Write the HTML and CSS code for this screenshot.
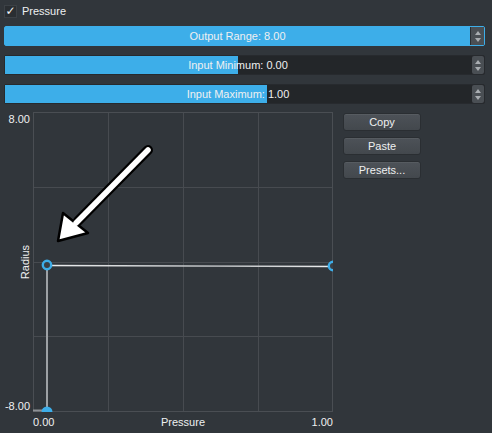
FILE: index.html
```html
<!DOCTYPE html>
<html>
<head>
<meta charset="utf-8">
<link rel="stylesheet" href="styles.css">
</head>
<body>
<div class="page">
  <label class="check-row">
    <span class="checkbox">✓</span>
    <span class="check-label">Pressure</span>
  </label>

  <div class="sliders">
    <div class="slider focused">
      <div class="track">
        <div class="fill" style="width:100%"></div>
        <span class="slider-text">Output Range: 8.00</span>
      </div>
      <div class="spin"><i class="up"></i><i class="down"></i></div>
    </div>
    <div class="slider">
      <div class="track">
        <div class="fill" style="width:50%"></div>
        <span class="slider-text">Input Minimum: 0.00</span>
      </div>
      <div class="spin"><i class="up"></i><i class="down"></i></div>
    </div>
    <div class="slider">
      <div class="track">
        <div class="fill" style="width:56.2%"></div>
        <span class="slider-text">Input Maximum: 1.00</span>
      </div>
      <div class="spin"><i class="up"></i><i class="down"></i></div>
    </div>
  </div>

  <div class="main">
    <div class="chart">
      <svg class="plot" width="340" height="321" viewBox="0 0 340 321">
        <defs>
          <clipPath id="pc"><rect x="33" y="0" width="300" height="300"/></clipPath>
          <linearGradient id="hl" x1="0" x2="1" y1="0" y2="0">
            <stop offset="0" stop-color="#eceeef"/>
            <stop offset="0.6" stop-color="#b9bcbf"/>
            <stop offset="1" stop-color="#eceeef"/>
          </linearGradient>
        </defs>
        <g stroke="#474b50" stroke-width="1" fill="none">
          <line x1="108.5" y1="0" x2="108.5" y2="300"/>
          <line x1="183.5" y1="0" x2="183.5" y2="300"/>
          <line x1="258.5" y1="0" x2="258.5" y2="300"/>
          <line x1="33" y1="75.5" x2="333" y2="75.5"/>
          <line x1="33" y1="150.5" x2="333" y2="150.5"/>
          <line x1="33" y1="224.5" x2="333" y2="224.5"/>
          <rect x="33.5" y="0.5" width="299" height="299" stroke="#4a4e53"/>
        </g>
        <g clip-path="url(#pc)">
          <line x1="33" y1="298.5" x2="47" y2="298.5" stroke="#8c9095" stroke-width="2"/>
          <line x1="47" y1="153" x2="47" y2="300" stroke="#9da1a5" stroke-width="2"/>
          <line x1="47" y1="153.5" x2="333" y2="154.5" stroke="url(#hl)" stroke-width="1.6"/>
          <circle cx="47" cy="153" r="4.2" fill="#3a3f44" stroke="#3daee9" stroke-width="2.4"/>
          <circle cx="333" cy="154" r="4.2" fill="#3a3f44" stroke="#3daee9" stroke-width="2.4"/>
          <circle cx="47" cy="300" r="5.5" fill="#3daee9"/>
        </g>
        <g class="arrow">
          <line x1="148" y1="38" x2="78" y2="109" stroke="#000" stroke-width="10" stroke-linecap="round"/>
          <polygon points="58,129 63,101 88,121" fill="#fff" stroke="#000" stroke-width="2.5" stroke-linejoin="round"/>
          <line x1="148" y1="38" x2="76" y2="111" stroke="#fff" stroke-width="5.5" stroke-linecap="round"/>
        </g>
      </svg>
      <span class="axis ymax">8.00</span>
      <span class="axis ymin">-8.00</span>
      <span class="axis ytitle">Radius</span>
      <span class="axis xmin">0.00</span>
      <span class="axis xtitle">Pressure</span>
      <span class="axis xmax">1.00</span>
    </div>
    <div class="buttons">
      <button class="btn">Copy</button>
      <button class="btn">Paste</button>
      <button class="btn">Presets...</button>
    </div>
  </div>
</div>
</body>
</html>
```

FILE: styles.css
```css
html, body {
  margin: 0;
  padding: 0;
  background: #31363b;
}
body {
  width: 492px;
  height: 433px;
  overflow: hidden;
  font-family: "Liberation Sans", Arial, sans-serif;
  font-size: 11px;
  color: #eff0f1;
}
.page {
  display: flex;
  flex-direction: column;
}
.check-row {
  display: flex;
  align-items: center;
  height: 22px;
  padding-left: 4px;
  gap: 5px;
}
.checkbox {
  width: 11px;
  height: 11px;
  border: 1px solid #3c4146;
  background: #2a2e32;
  color: #f4f5f6;
  font-size: 12px;
  line-height: 11px;
  text-align: center;
  font-family: "DejaVu Sans", sans-serif;
  margin-top: 1px;
}
.check-label {
  line-height: 13px;
  padding-top: 1px;
}
.sliders {
  display: flex;
  flex-direction: column;
  gap: 9px;
  padding: 4px 7px 0 4px;
}
.slider {
  display: flex;
  height: 20px;
  box-sizing: border-box;
  border: 1px solid #272a2e;
  border-radius: 2px;
  background: #232629;
}
.slider.focused {
  border-color: #3daee9;
}
.track {
  position: relative;
  flex: 1;
  display: flex;
  align-items: center;
  justify-content: center;
  overflow: hidden;
}
.fill {
  position: absolute;
  left: 0;
  top: 0;
  bottom: 0;
  background: #3daee9;
}
.slider-text {
  position: relative;
  line-height: 13px;
  padding-top: 1px;
}
.spin {
  width: 12px;
  margin: 0 0 0 1px;
  background: #4a4f54;
  border-radius: 2px;
  display: flex;
  flex-direction: column;
  align-items: center;
  justify-content: center;
  gap: 3px;
}
.focused .spin {
  margin: 0;
  border-left: 1px solid #2a2e32;
  border-radius: 0;
  width: 13px;
}
.spin i {
  width: 0;
  height: 0;
  border-left: 3.5px solid transparent;
  border-right: 3.5px solid transparent;
}
.spin .up {
  border-bottom: 4px solid #a9adb1;
}
.spin .down {
  border-top: 4px solid #a9adb1;
}
.main {
  display: flex;
  margin-top: 8px;
}
.chart {
  position: relative;
  width: 340px;
  height: 321px;
  flex: none;
}
.plot {
  display: block;
}
.axis {
  position: absolute;
  line-height: 13px;
  white-space: nowrap;
  color: #eff0f1;
}
.ymax {
  left: 0;
  width: 30px;
  text-align: right;
  top: 1px;
}
.ymin {
  left: 0;
  width: 30px;
  text-align: right;
  top: 288px;
}
.ytitle {
  left: 25px;
  top: 150px;
  transform: translate(-50%, -50%) rotate(-90deg);
}
.xmin {
  left: 33px;
  top: 304px;
}
.xtitle {
  left: 183px;
  top: 304px;
  transform: translateX(-50%);
}
.xmax {
  right: 7px;
  top: 304px;
}
.buttons {
  display: flex;
  flex-direction: column;
  gap: 6px;
  margin-left: 3px;
  padding-top: 1px;
}
.btn {
  width: 78px;
  height: 18px;
  box-sizing: border-box;
  padding: 0;
  font-family: "Liberation Sans", Arial, sans-serif;
  font-size: 11px;
  color: #eff0f1;
  background: linear-gradient(#4d5258, #43484d);
  border: 1px solid #2a2e32;
  border-radius: 3px;
  box-shadow: inset 0 1px 0 rgba(255,255,255,0.06);
  line-height: 14px;
}
```
